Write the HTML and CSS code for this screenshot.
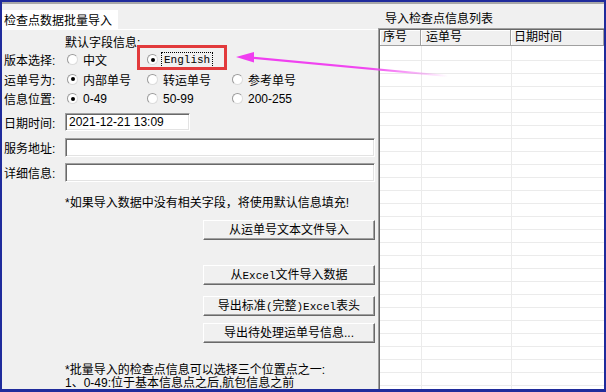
FILE: index.html
```html
<!DOCTYPE html>
<html lang="zh-CN">

<head>
    <meta charset="UTF-8">
    <title>检查点数据批量导入</title>
    <link rel="stylesheet" href="styles.css">
</head>

<body>
    <div class="window">
        <div class="client">
            <!-- left: import form -->
            <div class="left">
                <div class="tabs"><span class="tab">检查点数据批量导入</span></div>
                <div class="tab-body">
                    <div class="caption">默认字段信息:</div>

                    <div class="field row-a">
                        <span class="lbl">版本选择:</span>
                        <div class="options">
                            <span class="radio"><i></i>中文</span>
                            <span class="radio"><i class="on"></i><span class="mono focus">English</span></span>
                        </div>
                    </div>
                    <div class="field row-b">
                        <span class="lbl">运单号为:</span>
                        <div class="options">
                            <span class="radio"><i class="on"></i>内部单号</span>
                            <span class="radio"><i></i>转运单号</span>
                            <span class="radio"><i></i>参考单号</span>
                        </div>
                    </div>
                    <div class="field row-a">
                        <span class="lbl">信息位置:</span>
                        <div class="options">
                            <span class="radio"><i class="on"></i>0-49</span>
                            <span class="radio"><i></i>50-99</span>
                            <span class="radio"><i></i>200-255</span>
                        </div>
                    </div>

                    <div class="field input-row date-row">
                        <span class="lbl">日期时间:</span>
                        <div class="input short">2021-12-21 13:09</div>
                    </div>
                    <div class="field input-row addr-row">
                        <span class="lbl">服务地址:</span>
                        <div class="input"></div>
                    </div>
                    <div class="field input-row info-row">
                        <span class="lbl">详细信息:</span>
                        <div class="input"></div>
                    </div>

                    <div class="note">*如果导入数据中没有相关字段，将使用默认信息填充!</div>

                    <button class="btn b1">从运单号文本文件导入</button>
                    <button class="btn b2">从<span class="mono">Excel</span>文件导入数据</button>
                    <button class="btn b3">导出标准<span class="mono">(</span>完整<span class="mono">)Excel</span>表头</button>
                    <button class="btn b4">导出待处理运单号信息...</button>

                    <div class="help">
                        <div>*批量导入的检查点信息可以选择三个位置点之一:</div>
                        <div>1、0-49:位于基本信息点之后,航包信息之前</div>
                    </div>
                </div>
            </div>

            <!-- right: imported list -->
            <div class="right">
                <div class="list-title">导入检查点信息列表</div>
                <div class="listview">
                    <div class="lv-inner">
                        <div class="lv-head">
                            <span>序号</span>
                            <span class="wide">运单号</span>
                            <span>日期时间</span>
                        </div>
                        <div class="lv-body"></div>
                    </div>
                </div>
            </div>
        </div>

        <!-- annotation drawn over the dialog -->
        <div class="highlight"></div>
        <svg class="arrow" width="606" height="392" viewBox="0 0 606 392">
            <defs>
                <linearGradient id="fade" gradientUnits="userSpaceOnUse" x1="250" y1="0" x2="448" y2="0">
                    <stop offset="0" stop-color="#f03ef0" stop-opacity="1"/>
                    <stop offset="0.6" stop-color="#f03ef0" stop-opacity="0.95"/>
                    <stop offset="1" stop-color="#f03ef0" stop-opacity="0"/>
                </linearGradient>
            </defs>
            <path d="M250 57.5 L448 76" stroke="url(#fade)" stroke-width="2.2" fill="none"/>
            <polygon points="236,57 254,52 254,62.5" fill="#f03ef0"/>
        </svg>
    </div>
</body>

</html>
```

FILE: styles.css
```css
body {
    margin: 0;
    font-family: "Liberation Sans", "Noto Sans CJK SC", sans-serif;
    font-size: 12px;
    color: #000;
}

.window {
    position: relative;
    width: 606px;
    height: 392px;
    box-sizing: border-box;
    border: 2px solid #1f2b9c;
    border-bottom-width: 3px;
    background: #f0f0f0;
    overflow: hidden;
}

.client {
    display: flex;
    height: 100%;
    box-sizing: border-box;
    border-top: 2px solid #a8a8a8;
}

.mono {
    font-family: "Liberation Mono", monospace;
    font-size: 11px;
}

/* ---- left panel ---- */

.left {
    width: 376px;
    flex: none;
}

.tabs {
    height: 25px;
}

.tab {
    display: inline-block;
    margin-top: 6px;
    width: 116px;
    height: 19px;
    box-sizing: border-box;
    padding: 4px 0 0 2px;
    line-height: 15px;
    background: #fff;
}

.tab-body {
    border-top: 1px solid #fff;
    padding: 6px 0 0 2px;
}

.caption {
    margin-left: 61px;
    line-height: 14px;
}

.field {
    display: grid;
    grid-template-columns: 61px 1fr;
    align-items: center;
}

.row-a {
    height: 19px;
}

.row-b {
    height: 20px;
}

.options {
    display: grid;
    grid-template-columns: 80px 85px auto;
    padding-left: 2px;
}

.radio {
    display: inline-flex;
    align-items: center;
    gap: 5px;
    white-space: nowrap;
}

.radio i {
    display: grid;
    place-items: center;
    width: 11px;
    height: 11px;
    box-sizing: border-box;
    border-radius: 50%;
    border: 1px solid;
    border-color: #9a9a9a #dcdcdc #dcdcdc #9a9a9a;
    background: #fff;
}

.radio i.on::after {
    content: "";
    width: 4px;
    height: 4px;
    border-radius: 50%;
    background: #000;
}

.focus {
    outline: 1px dotted #000;
    outline-offset: 1px;
    padding: 0 1px;
}

.input {
    box-sizing: border-box;
    width: 310px;
    height: 19px;
    padding: 1px 3px;
    line-height: 15px;
    background: #fff;
    border: 1px solid;
    border-color: #a0a0a0 #fff #fff #a0a0a0;
    box-shadow: inset 1px 1px #696969, inset -1px -1px #e3e3e3;
}

.input.short {
    width: 125px;
    height: 18px;
    line-height: 14px;
}

.date-row {
    margin-top: 5px;
}

.addr-row {
    margin-top: 7px;
}

.info-row {
    margin-top: 6px;
}

.note {
    margin: 14px 0 0 61px;
    line-height: 14px;
}

.btn {
    display: block;
    width: 172px;
    height: 20px;
    margin-left: 199px;
    padding: 0;
    font: inherit;
    line-height: 16px;
    color: #000;
    background: #f0f0f0;
    border: 1px solid;
    border-color: #fff #696969 #696969 #fff;
    box-shadow: inset -1px -1px #a0a0a0;
}

.b1 { margin-top: 10px; }
.b2 { margin-top: 25px; }
.b3 { margin-top: 11px; }
.b4 { margin-top: 7px; }

.help {
    margin: 21px 0 0 61px;
    line-height: 13px;
    white-space: nowrap;
}

/* ---- right panel ---- */

.right {
    flex: 1;
    display: flex;
    flex-direction: column;
    min-width: 0;
}

.list-title {
    padding: 8px 0 2px 7px;
    line-height: 14px;
}

.listview {
    flex: 1;
    display: flex;
    border-top: 1px solid #a0a0a0;
    border-left: 1px solid #a0a0a0;
}

.lv-inner {
    flex: 1;
    display: flex;
    flex-direction: column;
    border-top: 1px solid #696969;
    border-left: 1px solid #696969;
    background: #fff;
}

.lv-head {
    display: grid;
    grid-template-columns: 41px 90px 1fr;
    height: 16px;
    background: #f0f0f0;
}

.lv-head span {
    box-sizing: border-box;
    padding-left: 3px;
    line-height: 15px;
    border-right: 1px solid #a0a0a0;
    border-bottom: 1px solid #a0a0a0;
    box-shadow: inset 1px 1px #fff;
    white-space: nowrap;
}

.lv-head span.wide {
    padding-left: 5px;
}

.lv-body {
    flex: 1;
    background-image:
        linear-gradient(to right, transparent 41px, #ebebeb 41px, #ebebeb 42px, transparent 42px,
            transparent 131px, #ebebeb 131px, #ebebeb 132px, transparent 132px),
        repeating-linear-gradient(to bottom, transparent 0, transparent 12px, #ebebeb 12px, #ebebeb 13px);
    background-position: 0 0, 0 2px;
}

/* ---- annotation ---- */

.highlight {
    position: absolute;
    left: 135px;
    top: 43px;
    width: 90px;
    height: 25px;
    box-sizing: border-box;
    border: 3px solid #e23a3c;
}

.arrow {
    position: absolute;
    left: -2px;
    top: -2px;
    pointer-events: none;
}
```
